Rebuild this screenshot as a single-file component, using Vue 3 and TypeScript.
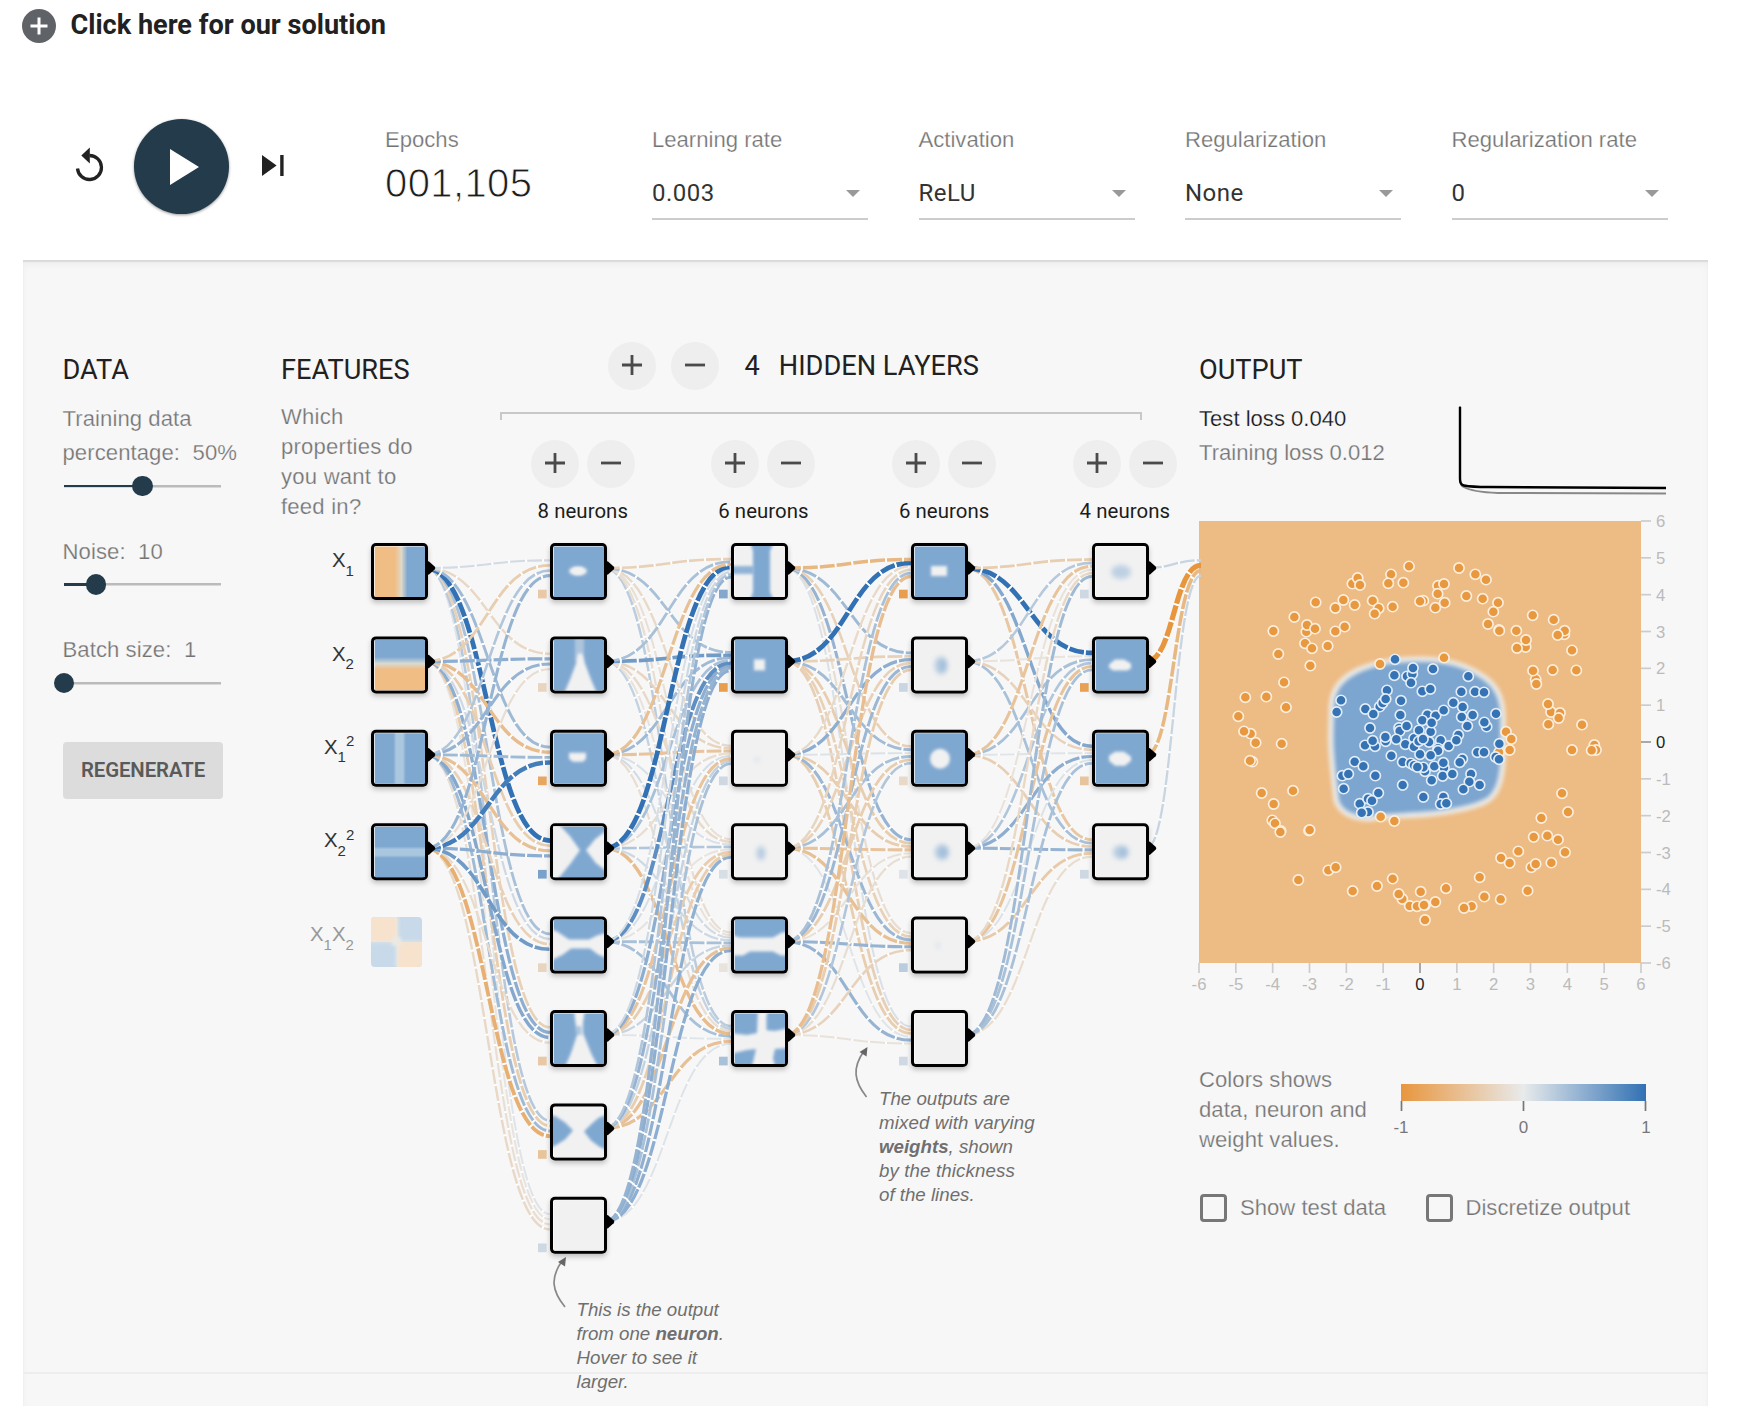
<script setup lang="ts">
type Shape = { d: string; fill: string; opacity: number; filter: string }
type NodeBox = { x: number; y: number; base: string; shapes: Shape[]; bias?: number }

const BLUE = '#7fa8d1'
const PALE = '#f1f1f1'

const rowY = (i: number): number => 543 + i * 93.4
const layerX = [371, 550, 731, 911, 1092]

const mix = (a: number[], b: number[], t: number): string =>
  'rgb(' + a.map((v, i) => Math.round(v + (b[i] - v) * t)).join(',') + ')'
const weightColor = (w: number): string => {
  const t = Math.min(1, Math.abs(w))
  return mix([232, 234, 235], w > 0 ? [49, 113, 180] : [232, 150, 62], t)
}

const ellipse = (cx: number, cy: number, rx: number, ry: number): string =>
  `M${cx - rx} ${cy}a${rx} ${ry} 0 1 0 ${rx * 2} 0a${rx} ${ry} 0 1 0 ${-rx * 2} 0z`
const pale = (d: string, opacity = 1): Shape => ({ d, fill: PALE, opacity, filter: 'url(#smooth)' })
const blue = (d: string, opacity = 1): Shape => ({ d, fill: BLUE, opacity, filter: 'url(#smooth)' })
const haze = (d: string, opacity: number): Shape => ({ d, fill: BLUE, opacity, filter: 'url(#haze)' })

const art: { base: string; shapes: Shape[] }[][] = [
  [
    { base: 'url(#split-x)', shapes: [] },
    { base: 'url(#split-y)', shapes: [] },
    { base: 'url(#band-x)', shapes: [] },
    { base: 'url(#band-y)', shapes: [] },
  ],
  [
    { base: BLUE, shapes: [pale(ellipse(25, 25, 9, 4.5)), pale('M21 22h8v6h-8z')] },
    { base: BLUE, shapes: [pale('M22 -4h9v26h-9z', 0.4), pale('M25 14h4l3 10 6 16 6 14H11l6-14 6-16z')] },
    { base: BLUE, shapes: [pale('M16 20h17v6l-3 3H20l-4-3z')] },
    { base: BLUE, shapes: [pale('M-4 -3h9l12 13 10 14-10 14L4 54h-8z'), pale('M55 3L42 13 33 24l10 13 12 9z')] },
    { base: BLUE, shapes: [pale('M-4 9l8 3 12 8h20l8-4 11-3v26l-10-4-8-6H18l-8 6-14 7z')] },
    { base: BLUE, shapes: [pale('M21 -4h11l-2 14v10l8 20 7 14H12l6-14 6-18-2-16z'), blue('M22 13h7v9h-7z', 0.55)] },
    { base: PALE, shapes: [blue('M-4 8l7 2 9 6 8 8-8 9-8 5-8 4z'), blue('M55 8l-9 3-7 6-8 8 7 9 8 6 9 4z')] },
    { base: PALE, shapes: [] },
  ],
  [
    { base: PALE, shapes: [blue('M16 -4h24l-4 9v41l4 9H16l3-9V5z'), blue('M-4 20h24v8H-4z', 0.85)] },
    { base: BLUE, shapes: [pale('M20 20h11v11H20z')] },
    { base: PALE, shapes: [haze(ellipse(23, 27, 2.5, 2.5), 0.2)] },
    { base: PALE, shapes: [haze(ellipse(27, 27, 4.5, 7), 0.5)] },
    { base: BLUE, shapes: [pale('M-4 15l10 3h33l9-5 9-1v24h-10l-8-4H16l-7 4H-4z')] },
    { base: BLUE, shapes: [pale('M24 -4h9v21l8 1 14-3v20l-14 1-2 9 3 12H17l3-12 2-9-9 1-17 4V20l17 2 10-2z'), blue('M32 3h5v14h-5z', 0.35)] },
  ],
  [
    { base: BLUE, shapes: [pale('M17 20h16v10H17z')] },
    { base: PALE, shapes: [haze(ellipse(27, 26, 6.5, 9), 0.5), haze(ellipse(29, 26, 2.5, 6), 0.5)] },
    { base: BLUE, shapes: [pale(ellipse(26, 26, 10, 10))] },
    { base: PALE, shapes: [haze(ellipse(28, 26, 7.5, 8), 0.5), haze(ellipse(29, 26, 3, 5), 0.5)] },
    { base: PALE, shapes: [haze(ellipse(24, 26, 2, 4), 0.2)] },
    { base: PALE, shapes: [] },
  ],
  [
    { base: PALE, shapes: [haze(ellipse(26, 26, 10, 7), 0.45)] },
    { base: BLUE, shapes: [pale('M20 20h9l7 4v5l-4 2H18l-4-3v-3z')] },
    { base: BLUE, shapes: [pale('M20 19h9l7 5v4l-6 5H20l-6-5v-5z')] },
    { base: PALE, shapes: [haze(ellipse(26, 26, 8, 7), 0.5), haze(ellipse(28, 26, 3, 5), 0.4)] },
  ],
]

const biases: number[][] = [
  [],
  [-0.4, -0.25, -0.8, 0.6, -0.25, -0.4, -0.45, 0.15],
  [0.55, -0.9, 0.15, 0.1, -0.08, 0.35],
  [-0.9, 0.17, -0.2, 0.06, 0.25, 0.14],
  [0.15, -0.87, -0.45, 0.15],
]

// weights[layer][target][source]
const weights: number[][][] = [
  [
    [0.12, -0.35, 0.3, 0.45],
    [-0.22, 0.5, 0.45, -0.15],
    [0.4, -0.55, 0.4, 0.9],
    [1, -0.35, -0.5, 0.5],
    [0.35, 0.15, -0.3, 0.65],
    [-0.3, 0.5, 0.55, -0.18],
    [0.28, -0.35, 0.4, -0.7],
    [0.06, -0.08, -0.14, -0.22],
  ],
  [
    [-0.3, 0.35, -0.5, 1, 0.1, 0.15, 0.3, 0.45],
    [0.35, 0.65, 0.4, 0.35, 0.75, 0.5, 0.45, 0.5],
    [-0.2, -0.25, -0.45, -0.15, 0.1, -0.45, 0.2, 0.35],
    [-0.12, -0.2, 0.08, 0.3, -0.08, -0.35, -0.35, 0.48],
    [-0.15, -0.1, 0.12, 0.15, 0.35, 0.18, -0.5, 0.5],
    [0.25, 0.2, -0.15, -0.55, 0.35, 0.05, -0.5, 0.06],
  ],
  [
    [-0.6, 1, -0.2, -0.25, 0.35, -0.52],
    [0.4, -0.3, 0.5, -0.3, 0.42, -0.35],
    [-0.3, 0.38, 0.07, 0.35, -0.35, 0.3],
    [0.45, -0.35, -0.35, -0.45, -0.12, -0.15],
    [-0.15, -0.3, 0.42, -0.5, 0.45, -0.28],
    [0.08, -0.33, -0.35, 0.05, 0.45, -0.1],
  ],
  [
    [-0.35, 0.28, -0.45, -0.1, -0.22, 0.4],
    [1, -0.08, 0.35, 0.3, -0.45, 0.35],
    [0.55, -0.28, 0.05, 0.5, 0.07, 0.35],
    [-0.42, 0.35, -0.33, 0.45, -0.38, -0.16],
  ],
  [[0.18, -1.15, -0.6, 0.18]],
]

const nodes: NodeBox[] = art.flatMap((layer, l) =>
  layer.map((a, i) => ({ x: layerX[l], y: rowY(i), base: a.base, shapes: a.shapes, bias: biases[l][i] })),
)

// Earlier links lie on top of later ones.
const links = weights
  .flatMap((layer, l) =>
    layer.flatMap((sources, j) =>
      sources.map((w, i) => {
        const sx = layerX[l] + 54.5
        const sy = rowY(i) + 25
        const tx = l === 4 ? 1201 : layerX[l + 1]
        const ty = rowY(j) + 25 + ((i - (sources.length - 1) / 2) / sources.length) * 20.4
        const mx = (sx + tx) / 2
        return {
          d: `M${sx} ${sy}C${mx} ${sy} ${mx} ${ty} ${tx} ${ty}`,
          color: weightColor(w),
          width: (1 + Math.abs(w) * 1.8) * 1.7,
        }
      }),
    ),
  )
  .reverse()

const sliders = [
  { label: 'Training data percentage:', value: '50%', fill: 50 },
  { label: 'Noise:', value: '10', fill: 20.4 },
  { label: 'Batch size:', value: '1', fill: 0 },
]
const selects = [
  { label: 'Learning rate', value: '0.003' },
  { label: 'Activation', value: 'ReLU' },
  { label: 'Regularization', value: 'None' },
  { label: 'Regularization rate', value: '0' },
]
const layerSizes = [8, 6, 6, 4]
const ticks = Array.from({ length: 13 }, (_, i) => i - 6)

const pairs = (s: string): number[][] => s.trim().split(/\s+/).map((p) => p.split(',').map(Number))
const orangeDots = pairs(`657,139 603,163 595,190 640,188 487,191 503,174 510,195 377,247 460,240 436,264 494,255
548,242 566,265 554,281 608,260 700,242 690,244 744,197 762,192 743,221 764,248 736,263 807,144 856,163 888,179
829,228 878,236 313,291 250,333 265,402 349,335 351,315 375,326 345,370 366,385 413,378 436,334 464,320 361,437
282,487 166,532 229,530 288,562 145,589 182,641 162,634 197,668 275,671 187,725 180,722 215,819 309,812 251,852
247,901 255,910 272,933 271,936 357,932 359,930 415,1051 437,1042 325,1080 488,1113 561,1098 608,1076 637,1137
626,1122 692,1115 659,1158 681,1159 705,1155 702,1155 736,1146 705,1200 768,1105 845,1159 822,1164 570,432 762,413
572,890 613,903 924,248 910,275 894,312 927,330 928,332 979,332 1028,286 1091,299 1123,343 1124,332 1103,345
1146,391 1007,381 1008,360 981,384 1088,450 1159,451 1037,478 1029,452 1039,492 1083,576 1074,552 1110,579
1106,594 1075,613 1176,614 948,635 964,657 927,697 959,690 1146,690 1213,675 1218,690 1205,691 1116,820 1134,876
1054,894 1031,951 1072,947 1104,959 1125,997 985,994 933,1014 959,1029 1024,1042 1037,1032 1084,1028 869,1072
883,1130 932,1138 1013,1112`)
const blueDots = pairs(`615,418 613,466 651,469 667,462 669,444 663,488 729,447 835,469 697,514 721,507 814,515 855,515
882,517 591,511 569,560 578,549 587,537 633,542 526,567 550,582 453,541 440,576 631,585 712,584 737,587 761,571
790,548 818,561 815,591 848,585 832,618 890,620 883,607 697,601 722,635 725,608 540,624 627,624 629,633 650,618
672,655 687,631 619,658 587,664 586,651 525,676 555,679 548,662 646,673 672,680 686,664 717,666 699,657 752,661
776,678 805,645 799,661 744,685 744,692 690,703 722,706 604,707 638,726 662,730 672,736 705,754 700,742 682,741
762,743 733,739 760,728 758,768 787,762 725,781 817,717 809,727 862,697 882,697 843,762 838,785 869,795 820,808
638,795 700,831 760,831 752,852 769,850 494,725 520,739 457,767 475,762 461,806 556,767 565,819 509,851 534,836
546,842 534,876 515,878 918,581 928,671 917,711 927,718`)
</script>

<template>
  <div class="page">
    <div class="solution">
      <svg width="34" height="34" viewBox="0 0 34 34">
        <circle cx="17" cy="17" r="17" fill="#5f6368" />
        <path d="M17 8.500v17M8.500 17h17" stroke="#fff" stroke-width="3" />
      </svg>
      <strong>Click here for our solution</strong>
    </div>

    <div class="controls">
      <div class="playback">
        <svg class="reset" width="29" height="36" viewBox="0 0 29 36">
          <path d="M14.500 8.500A12 12 0 1 1 2.500 21.500" fill="none" stroke="#222" stroke-width="3.300" />
          <path d="M14.800 0.500v16L6.300 8.400z" fill="#222" />
        </svg>
        <div class="play">
          <svg width="29" height="36" viewBox="0 0 29 36"><path d="M0 0L29 18L0 36z" fill="#fff" /></svg>
        </div>
        <svg class="step" width="22" height="21" viewBox="0 0 22 21">
          <path d="M0 0L14.600 10.500L0 21zM18.200 0h3.400v21h-3.400z" fill="#222" />
        </svg>
      </div>
      <div class="epochs">
        <span class="label">Epochs</span>
        <span class="count">001,105</span>
      </div>
      <div v-for="s in selects" :key="s.label" class="select">
        <span class="label">{{ s.label }}</span>
        <div class="value">
          <span>{{ s.value }}</span>
          <svg width="14" height="7" viewBox="0 0 14 7"><path d="M0 0h14L7 7z" fill="#999" /></svg>
        </div>
      </div>
    </div>

    <main class="main">
      <section class="col data">
        <h4>DATA</h4>
        <div v-for="s in sliders" :key="s.label" class="field">
          <label class="thin">{{ s.label }}&nbsp; <span>{{ s.value }}</span></label>
          <div class="slider">
            <div class="filled" :style="{ width: s.fill + '%' }"></div>
            <div class="knob"></div>
          </div>
        </div>
        <button class="regen">REGENERATE</button>
      </section>

      <section class="col features">
        <h4>FEATURES</h4>
        <p class="thin">Which properties do you want to feed in?</p>
      </section>

      <section class="layers">
        <div class="title">
          <button class="round"><svg viewBox="0 0 24 24"><path d="M12 2v20M2 12h20" /></svg></button>
          <button class="round wide"><svg viewBox="0 0 24 24"><path d="M2 12h20" /></svg></button>
          <h4 class="num">4</h4>
          <h4>HIDDEN LAYERS</h4>
        </div>
        <div class="bracket"></div>
        <div class="sizes">
          <div v-for="(n, i) in layerSizes" :key="i" class="size">
            <div class="pair">
              <button class="round"><svg viewBox="0 0 24 24"><path d="M12 2v20M2 12h20" /></svg></button>
              <button class="round"><svg viewBox="0 0 24 24"><path d="M2 12h20" /></svg></button>
            </div>
            <span>{{ n }} neurons</span>
          </div>
        </div>
      </section>

      <section class="col output">
        <h4>OUTPUT</h4>
        <div class="loss">
          <div class="figures">
            <div class="test">Test loss 0.040</div>
            <div class="thin">Training loss 0.012</div>
          </div>
          <svg width="210" height="90" viewBox="0 0 210 90">
            <path d="M2 0V72Q2 80 6 81Q14 86 40 87L208 87.500" fill="none" stroke="#888" stroke-width="2" />
            <path d="M2 1V73Q2 79 6 79.500Q14 81 30 81L208 82" fill="none" stroke="#000" stroke-width="2.400" />
          </svg>
        </div>
        <svg class="heat" width="500" height="476" viewBox="27 3 1500 1428">
          <defs>
            <filter id="soft" x="-10%" y="-10%" width="120%" height="120%"><feGaussianBlur stdDeviation="6" /></filter>
          </defs>
          <rect x="27" y="3" width="1326" height="1326" fill="#edbb84" />
          <path
            d="M424 560C426 505 455 475 500 452C560 424 620 417 690 417C770 417 830 435 880 470C925 500 938 540 939 590L940 700C938 770 928 815 895 840C860 862 780 878 700 884C640 888 600 888 560 893C510 905 450 885 438 840C432 780 422 720 422 650Z"
            fill="#7ba5cf"
            stroke="#edf0ee"
            stroke-width="14"
            filter="url(#soft)"
          />
          <g stroke-width="5">
            <circle v-for="(p, i) in orangeDots" :key="'o' + i" :cx="p[0]" :cy="p[1]" r="15.300" fill="#e8993f" stroke="#fbeedd" />
            <circle v-for="(p, i) in blueDots" :key="'b' + i" :cx="p[0]" :cy="p[1]" r="15.300" fill="#3573b5" stroke="#e3edf6" />
          </g>
          <g v-for="t in ticks" :key="t" class="tick" :class="{ zero: t === 0 }">
            <path :d="`M${690 + t * 110.5} 1329v30`" />
            <text :x="690 + t * 110.5" y="1411" text-anchor="middle">{{ t }}</text>
            <path :d="`M1353 ${666 - t * 110.5}h30`" />
            <text x="1398" :y="684 - t * 110.5">{{ t }}</text>
          </g>
        </svg>
        <div class="legend">
          <p class="thin">Colors shows data, neuron and weight values.</p>
          <svg width="270" height="60" viewBox="0 0 270 60">
            <defs>
              <linearGradient id="scale">
                <stop offset="0" stop-color="#e8963e" />
                <stop offset=".5" stop-color="#e8eaeb" />
                <stop offset="1" stop-color="#3171b4" />
              </linearGradient>
            </defs>
            <rect x="13" y="0" width="245" height="17" fill="url(#scale)" />
            <path d="M13.500 17v10M135.500 17v10M257.500 17v10" stroke="#777" stroke-width="1.700" />
            <text x="13" y="48.500">-1</text>
            <text x="135.500" y="48.500">0</text>
            <text x="258" y="48.500">1</text>
          </svg>
        </div>
        <div class="checks">
          <label class="thin"><i></i>Show test data</label>
          <label class="thin"><i></i>Discretize output</label>
        </div>
      </section>
      <div class="footline"></div>
    </main>

    <svg class="network" width="1744" height="1406" viewBox="0 0 1744 1406">
      <defs>
        <linearGradient id="split-x">
          <stop offset=".4" stop-color="#f0bd84" />
          <stop offset=".53" stop-color="#e0d9c8" />
          <stop offset=".65" stop-color="#7fa8d1" />
        </linearGradient>
        <linearGradient id="split-y" x2="0" y2="1">
          <stop offset=".34" stop-color="#7fa8d1" />
          <stop offset=".47" stop-color="#d9dbd2" />
          <stop offset=".58" stop-color="#f0bd84" />
        </linearGradient>
        <linearGradient id="band-x">
          <stop offset=".37" stop-color="#7fa8d1" />
          <stop offset=".43" stop-color="#aac7e0" />
          <stop offset=".56" stop-color="#aac7e0" />
          <stop offset=".62" stop-color="#7fa8d1" />
        </linearGradient>
        <linearGradient id="band-y" x2="0" y2="1">
          <stop offset=".39" stop-color="#7fa8d1" />
          <stop offset=".45" stop-color="#aac7e0" />
          <stop offset=".56" stop-color="#aac7e0" />
          <stop offset=".62" stop-color="#7fa8d1" />
        </linearGradient>
        <filter id="smooth" filterUnits="userSpaceOnUse" x="-10" y="-10" width="71" height="71"><feGaussianBlur stdDeviation="1.700" /></filter>
        <filter id="haze" filterUnits="userSpaceOnUse" x="-10" y="-10" width="71" height="71"><feGaussianBlur stdDeviation="2.600" /></filter>
        <filter id="drop" x="-20%" y="-20%" width="150%" height="150%">
          <feDropShadow dx="0" dy="3" stdDeviation="2.500" flood-color="#000" flood-opacity=".22" />
        </filter>
        <clipPath id="cell"><rect x="3" y="3" width="51" height="51" /></clipPath>
        <clipPath id="rounded"><rect width="51" height="50" rx="4" /></clipPath>
      </defs>

      <g fill="none">
        <template v-for="(l, i) in links" :key="i">
          <path :d="l.d" :stroke="l.color" :stroke-width="l.width" stroke-dasharray="15.300 1.700" />
          <path :d="l.d" stroke="#fff" :stroke-width="l.width + 0.6" stroke-dasharray="1.700 15.300" stroke-dashoffset="-15.300" />
        </template>
      </g>

      <g v-for="(n, i) in nodes" :key="i" :transform="`translate(${n.x} ${n.y})`">
        <path d="M56 18l2 .5 5.600 5q1.500 1.500 0 3l-5.600 5-2 .5z" fill="#000" />
        <rect width="57" height="57" rx="5" fill="#000" filter="url(#drop)" />
        <rect x="3" y="3" width="51" height="51" rx="2" fill="#fff" />
        <g clip-path="url(#cell)">
          <rect x="3.700" y="3.500" width="50.300" height="50.500" rx="1" :fill="n.base" />
          <g transform="translate(3 3)">
            <path v-for="(s, k) in n.shapes" :key="k" :d="s.d" :fill="s.fill" :opacity="s.opacity" :filter="s.filter" />
          </g>
        </g>
        <rect v-if="n.bias !== undefined" x="-12" y="46.700" width="8.700" height="8.700" :fill="weightColor(n.bias)" />
      </g>

      <g transform="translate(371 917)" clip-path="url(#rounded)">
        <rect width="51" height="51" fill="#c8daea" />
        <path d="M0 0h26v25h25v26H26V25H0z" fill="#f6e2cd" />
        <path d="M21 20h9v9h-9zM24.800 0h2.400v50h-2.400zM0 24h51v1.500H0z" fill="#ece9e2" filter="url(#smooth)" />
      </g>

      <g class="names">
        <text x="332" y="567">X<tspan class="small" dy="8.500">1</tspan></text>
        <text x="332" y="660.500">X<tspan class="small" dy="8.500">2</tspan></text>
        <text x="324" y="753.500">X<tspan class="small" dy="8.500">1</tspan><tspan class="small" dy="-16">2</tspan></text>
        <text x="324" y="847">X<tspan class="small" dy="8.500">2</tspan><tspan class="small" dy="-16">2</tspan></text>
        <text x="310" y="941" class="off">X<tspan class="small" dy="8.500">1</tspan><tspan dy="-8.500">X</tspan><tspan class="small" dy="8.500">2</tspan></text>
      </g>

      <g fill="none" stroke="#888" stroke-width="1.700">
        <path d="M565 1307C552 1291 550 1278 562 1261" />
        <path d="M566 1257l-1 9.500-7-4.500z" fill="#666" stroke="none" />
        <path d="M866.500 1097C854 1081 852 1068 864 1051" />
        <path d="M867.500 1047l-1 9.500-7-4.500z" fill="#666" stroke="none" />
      </g>
      <g class="note">
        <text x="576.500" y="1316">This is the output</text>
        <text x="576.500" y="1340">from one <tspan>neuron</tspan>.</text>
        <text x="576.500" y="1364">Hover to see it</text>
        <text x="576.500" y="1388">larger.</text>
        <text x="879" y="1105">The outputs are</text>
        <text x="879" y="1129" class="spread">mixed with varying</text>
        <text x="879" y="1153"><tspan>weights</tspan>, shown</text>
        <text x="879" y="1177" class="spread">by the thickness</text>
        <text x="879" y="1201">of the lines.</text>
      </g>
    </svg>
  </div>
</template>

<style>
body {
  margin: 0;
  background: #fff;
}
</style>

<style scoped>
.page {
  position: relative;
  width: 1744px;
  height: 1406px;
  overflow: hidden;
  background: #fff;
  font-family: 'Liberation Sans', Arial, sans-serif;
  font-size: 22.1px;
  color: #737373;
  display: flex;
  flex-direction: column;
}
svg {
  display: block;
  flex: none;
}
h4,
p {
  margin: 0;
  font-weight: 400;
}
button {
  border: 0;
  padding: 0;
  margin: 0;
}
.solution {
  display: flex;
  align-items: center;
  gap: 14.5px;
  height: 34px;
  padding: 9px 0 0 22px;
}
.solution strong {
  font: 700 27.1px/34px Roboto, sans-serif;
  color: #212121;
  margin-top: -3px;
}
.controls {
  box-sizing: border-box;
  height: 217px;
  margin: 0 36px 0 22.5px;
  display: flex;
  align-items: flex-start;
  padding-top: 75px;
}
.playback {
  width: 362.5px;
  height: 97px;
  box-sizing: border-box;
  padding-left: 52px;
  display: flex;
  align-items: center;
}
.reset {
  margin-top: -3px;
}
.play {
  width: 95.5px;
  height: 95.5px;
  border-radius: 50%;
  background: #233b4a;
  box-shadow: 0 1px 3px rgba(0, 0, 0, 0.4);
  margin: 0 33px 0 30px;
  display: flex;
  align-items: center;
}
.play svg {
  margin-left: 36.5px;
}
.step {
  margin-top: -2px;
}
.label {
  display: block;
  line-height: 30px;
  -webkit-text-stroke: 0.25px #fff;
}
.epochs {
  width: 267px;
  padding-top: 7px;
}
.count {
  display: block;
  font-size: 40px;
  line-height: 50px;
  letter-spacing: 0.4px;
  color: #1c1c1c;
  margin-top: 3px;
  -webkit-text-stroke: 0.9px #fff;
}
.select {
  width: 216px;
  margin-right: 50.5px;
  padding-top: 7px;
}
.select:last-child {
  margin-right: 0;
}
.value {
  display: flex;
  align-items: center;
  justify-content: space-between;
  box-sizing: border-box;
  width: 216px;
  height: 60px;
  margin-top: 5px;
  padding: 10px 8.5px 2px 0;
  border-bottom: 2px solid #ccc;
  font: 400 24px/30px Roboto, sans-serif;
  letter-spacing: 0.5px;
  color: #333;
}
.thin {
  -webkit-text-stroke: 0.25px #f7f7f7;
}
.main {
  position: relative;
  width: 1685.5px;
  margin-left: 22.5px;
  height: 1146px;
  box-sizing: border-box;
  padding: 82px 0 0 40.5px;
  background: #f7f7f7;
  box-shadow: inset 0 2px 1px #dadada, inset 0 5px 6px #eee;
  display: flex;
}
h4 {
  font: 400 27.2px/34px Roboto, sans-serif;
  color: #212121;
}
.col {
  padding-top: 10.7px;
}
.col h4 {
  margin-bottom: 15.4px;
}
.data {
  width: 218px;
}
.data h4 {
  margin-left: -0.5px;
}
.field {
  margin-bottom: 38.5px;
}
.field label {
  display: block;
  width: 182px;
  line-height: 34px;
  margin-left: -0.5px;
  letter-spacing: 0.08px;
  white-space: normal;
}
.slider {
  position: relative;
  margin: 6px 0 0 1px;
  width: 157px;
  height: 20px;
  display: flex;
  align-items: center;
  background: linear-gradient(#bbb, #bbb) center / 100% 2.5px no-repeat;
}
.filled {
  height: 2.5px;
  background: #233b4a;
}
.knob {
  width: 20.5px;
  height: 20.5px;
  border-radius: 50%;
  background: #233b4a;
  margin-left: -10.25px;
}
.regen {
  margin-top: 10px;
  width: 160px;
  height: 57px;
  border-radius: 4px;
  background: #dcdcdc;
  color: #5a5a5a;
  font: 600 20.4px/57px Roboto, sans-serif;
  letter-spacing: -0.1px;
}
.features {
  width: 219px;
}
.features p {
  width: 152px;
  line-height: 30px;
  letter-spacing: 0.22px;
}
.layers {
  width: 699px;
}
.title {
  display: flex;
  align-items: center;
  padding-left: 108px;
  height: 48px;
}
.title h4 {
  margin-top: -1px;
}
.title .num {
  margin: -1px 19px 0 26px;
}
.title .wide {
  margin-left: 14.5px;
}
.round {
  width: 48px;
  height: 48px;
  border-radius: 50%;
  background: #eee;
  display: flex;
  align-items: center;
  justify-content: center;
}
.round svg {
  width: 24px;
  height: 24px;
  margin-top: -2px;
  fill: none;
  stroke: #4a4a4a;
  stroke-width: 2.8;
}
.bracket {
  box-sizing: border-box;
  width: 641.5px;
  height: 8px;
  margin-top: 22px;
  border: 2px solid #c8c8c8;
  border-bottom: 0;
}
.sizes {
  display: flex;
  margin: 20px 0 0 30.5px;
}
.size {
  width: 180.7px;
  flex: none;
}
.pair {
  display: flex;
  gap: 8px;
}
.size span {
  display: block;
  font: 400 20.4px/24px Roboto, sans-serif;
  color: #1c1c1c;
  letter-spacing: 0.06px;
  margin: 10.5px 0 0 7px;
}
.output {
  width: 508px;
}
.loss {
  display: flex;
  height: 118.9px;
  line-height: 34px;
}
.figures {
  width: 259px;
}
.loss svg {
  margin-top: 4px;
}
.test {
  color: #111;
  -webkit-text-stroke: 0.25px #f7f7f7;
}
.heat {
  overflow: visible;
}
.tick path {
  stroke: #ccc;
  stroke-width: 5;
}
.tick text {
  font-size: 50px;
  fill: #bbb;
}
.zero path {
  stroke: #999;
}
.zero text {
  fill: #222;
}
.legend {
  display: flex;
  margin-top: 68px;
}
.legend p {
  width: 176px;
  margin-right: 13px;
  line-height: 30px;
  letter-spacing: 0.05px;
}
.legend svg {
  margin-top: 19px;
}
.legend text {
  font-size: 17px;
  fill: #777;
  text-anchor: middle;
}
.checks {
  display: flex;
  margin: 39px 0 0 1px;
}
.checks label {
  display: flex;
  align-items: center;
  width: 225.5px;
  height: 28px;
  white-space: nowrap;
}
.checks i {
  box-sizing: border-box;
  width: 27px;
  height: 28px;
  border: 3px solid #777;
  border-radius: 4px;
  margin-right: 13px;
}
.footline {
  position: absolute;
  left: 0;
  right: 0;
  top: 1112px;
  height: 2px;
  background: #ededed;
}
.network {
  position: absolute;
  left: 0;
  top: 0;
  pointer-events: none;
}
.names text {
  font-size: 20.4px;
  fill: #333;
}
.names .small {
  font-size: 15px;
}
.names .off {
  fill: #999;
}
.note text {
  font-size: 18.7px;
  font-style: italic;
  fill: #6f6f6f;
}
.note .spread {
  letter-spacing: 0.12px;
}
.note tspan {
  font-weight: 700;
}
</style>
